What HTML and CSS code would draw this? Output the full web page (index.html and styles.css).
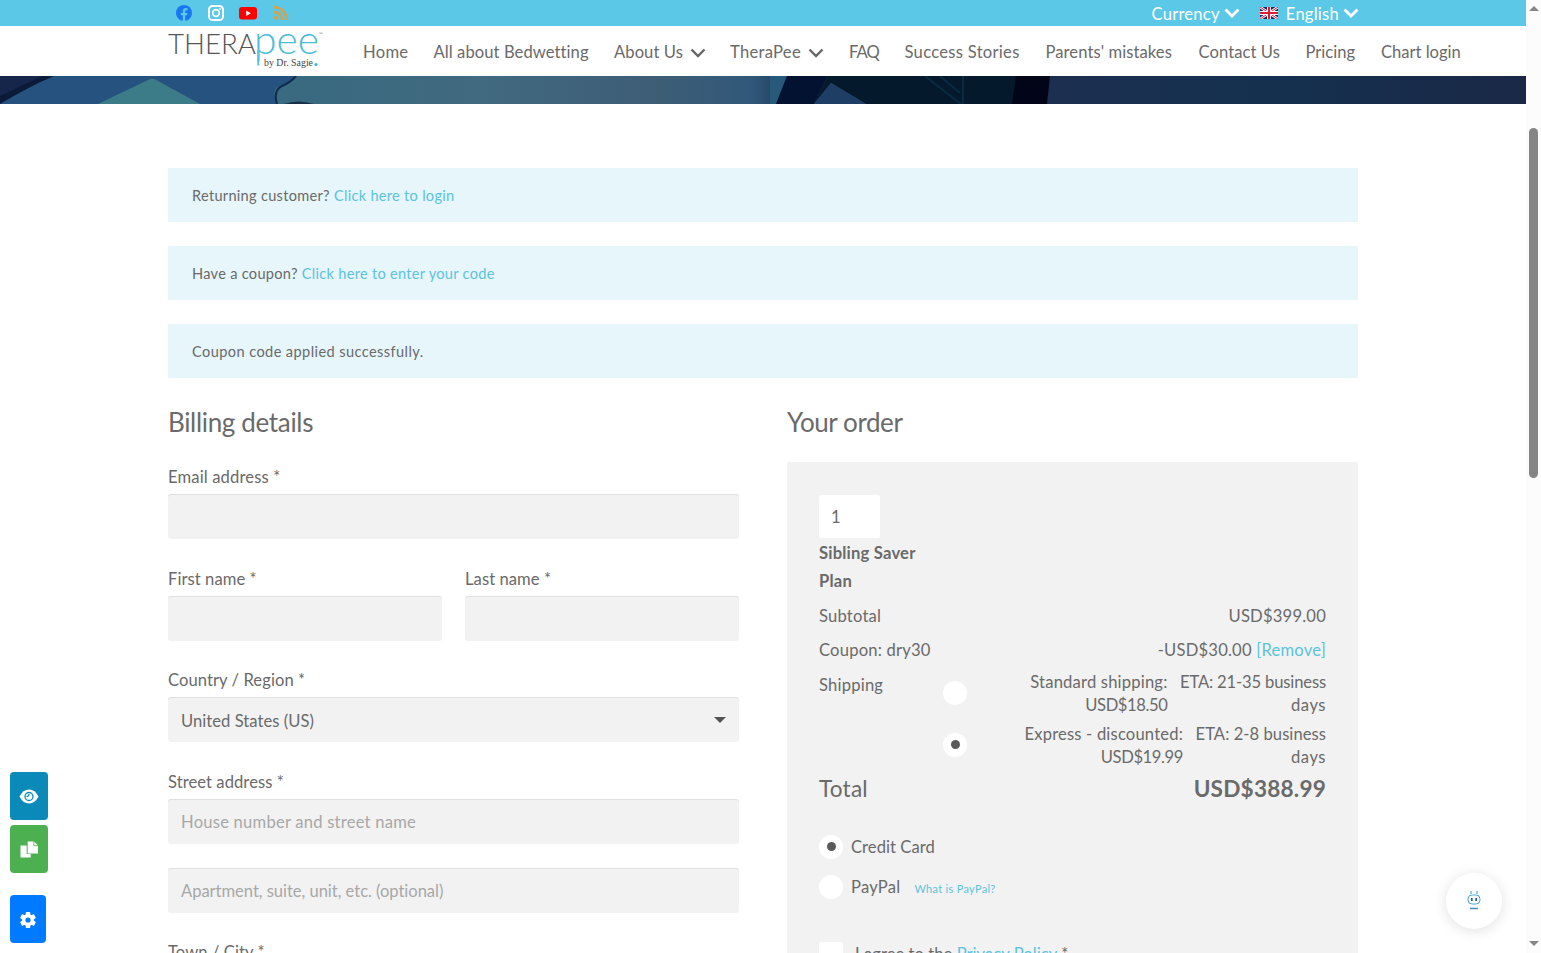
FILE: index.html
```
<!DOCTYPE html>
<html lang="en">
<head>
    <meta charset="utf-8">
    <title>Checkout - TheraPee</title>
    <link rel="stylesheet" href="styles.css">
</head>
<body>
<div class="page">
    <header>
        <div class="topbar">
            <div class="social">
                <svg width="16" height="16" viewBox="0 0 16 16"><circle cx="8" cy="8" r="8" fill="#1877f2"/><path d="M6.8 15.9V10.3H4.8V8h2V6.2c0-2 1.2-3.100 3-3.100l1.700.150v2h-1c-1 0-1.300.600-1.300 1.200V8h2.200l-.350 2.300H9.200v5.600z" fill="#5ac8e6"/></svg>
                <svg width="16" height="16" viewBox="0 0 16 16" fill="none" stroke="#fff"><rect x="1" y="1" width="14" height="14" rx="3.600" stroke-width="2"/><circle cx="8" cy="8" r="3.300" stroke-width="1.700"/><circle cx="12.100" cy="3.900" r=".9" fill="#fff" stroke="none"/></svg>
                <svg width="18" height="16" viewBox="0 0 18 16"><rect x="0" y="2" width="18" height="12.500" rx="3" fill="#f00"/><path d="M7.200 5.600l4.700 2.650-4.700 2.650z" fill="#fff"/></svg>
                <svg class="rss" width="16" height="16" viewBox="0 0 16 16"><circle cx="2.800" cy="12.800" r="2" fill="#c8a65a"/><path d="M1 7a8 8 0 0 1 8 8M1 2.200A12.800 12.800 0 0 1 13.800 15" fill="none" stroke="#c8a65a" stroke-width="2.800"/></svg>
            </div>
            <div class="switchers">
                <a class="currency">Currency</a>
                <svg width="16" height="10" viewBox="0 0 16 10"><path d="M1.500 1.500L8 8l6.500-6.500" fill="none" stroke="#fff" stroke-width="2.800"/></svg>
                <svg class="flag" width="18" height="12" viewBox="0 0 18 12"><rect width="18" height="12" fill="#1c2a5e"/><path d="M0 0l18 12M18 0L0 12" stroke="#fff" stroke-width="2.600"/><path d="M0 0l18 12M18 0L0 12" stroke="#d0203c" stroke-width="1"/><path d="M9 0v12M0 6h18" stroke="#fff" stroke-width="4"/><path d="M9 0v12M0 6h18" stroke="#d0203c" stroke-width="2.200"/></svg>
                <a class="lang">English</a>
                <svg width="16" height="10" viewBox="0 0 16 10"><path d="M1.500 1.500L8 8l6.500-6.500" fill="none" stroke="#fff" stroke-width="2.800"/></svg>
            </div>
        </div>
        <div class="navbar">
            <svg class="logo" width="158" height="46" viewBox="0 0 158 46">
                <text class="logo-thera" x="0" y="24" textLength="88" lengthAdjust="spacingAndGlyphs">THERA</text>
                <text class="logo-pee" x="86" y="24" textLength="65" lengthAdjust="spacingAndGlyphs">pee</text>
                <path d="M90.300 20v15.500" stroke="#5cc3dc" stroke-width="2"/>
                <text class="logo-tm" x="151" y="6">™</text>
                <text class="logo-by" x="96" y="36" textLength="49" lengthAdjust="spacingAndGlyphs">by Dr. Sagie</text>
                <circle cx="148" cy="34.500" r="1.600" fill="#3fb4d2"/>
            </svg>
            <nav class="menu">
                <a class="n1">Home</a>
                <a class="n2">All about Bedwetting</a>
                <a class="n3">About Us <svg width="16" height="10" viewBox="0 0 16 10"><path d="M1.500 1.500L8 8l6.500-6.500" fill="none" stroke="#666" stroke-width="2.400"/></svg></a>
                <a class="n4">TheraPee <svg width="16" height="10" viewBox="0 0 16 10"><path d="M1.500 1.500L8 8l6.500-6.500" fill="none" stroke="#666" stroke-width="2.400"/></svg></a>
                <a class="n5">FAQ</a>
                <a class="n6">Success Stories</a>
                <a class="n7">Parents' mistakes</a>
                <a class="n8">Contact Us</a>
                <a class="n9">Pricing</a>
                <a class="n10">Chart login</a>
            </nav>
        </div>
    </header>

    <svg class="hero" width="1526" height="28" viewBox="0 0 1526 28" preserveAspectRatio="none">
        <defs>
            <linearGradient id="tablet" x1="0" x2="1" y1="0" y2="0">
                <stop offset="0" stop-color="#386a80"/>
                <stop offset=".4" stop-color="#41697f"/>
                <stop offset=".75" stop-color="#3d5d75"/>
                <stop offset=".93" stop-color="#31587a"/>
                <stop offset="1" stop-color="#1f3d5a"/>
            </linearGradient>
            <linearGradient id="night" x1="0" x2="1" y1="0" y2="0">
                <stop offset="0" stop-color="#1c2f50"/>
                <stop offset=".5" stop-color="#14304e"/>
                <stop offset="1" stop-color="#1a2846"/>
            </linearGradient>
        </defs>
        <rect width="1526" height="28" fill="#265280"/>
        <path d="M0 0h48L0 26z" fill="#16264a"/>
        <path d="M42 0h12Q30 10 0 28v-8z" fill="#0b1a38"/>
        <path d="M98 28L148 4q5-3 10 1l42 23z" fill="#3b7c88"/>
        <path d="M295 0h492l-11 28H277q-6-14 2-18 12-4 16-10z" fill="url(#tablet)"/>
        <path d="M296 0q-5 6-14 10t-5 18" fill="none" stroke="#0f2c4c" stroke-width="2"/>
        <path d="M284 28q14-5 30 0z" fill="#182f48"/>
        <path d="M770 0h17l-11 28h-6z" fill="#26597a"/>
        <path d="M787 0h41l-14 28h-38z" fill="#031230"/>
        <path d="M828 0h190v28H866L831 7l-17 21z" fill="#041a2c"/>
        <path d="M831 7l35 21h-52z" fill="#1e3e66"/>
        <path d="M925 0l36 28M963 0v28M940 0l20 17" stroke="#0a2a40" stroke-width="2" fill="none"/>
        <path d="M1016 0h34v28h-38z" fill="#020418"/>
        <path d="M1050 0h476v28h-479z" fill="url(#night)"/>
    </svg>

    <main>
        <div class="notice login">Returning customer? <a>Click here to login</a></div>
        <div class="notice coupon">Have a coupon? <a>Click here to enter your code</a></div>
        <div class="notice applied">Coupon code applied successfully.</div>

        <div class="columns">
            <form class="billing">
                <h3>Billing details</h3>
                <div class="row">
                    <label class="l-email">Email address *</label>
                    <div class="field"></div>
                </div>
                <div class="row half">
                    <div>
                        <label class="l-first">First name *</label>
                        <div class="field"></div>
                    </div>
                    <div>
                        <label class="l-last">Last name *</label>
                        <div class="field"></div>
                    </div>
                </div>
                <div class="row">
                    <label class="l-country">Country / Region *</label>
                    <div class="field select"><span>United States (US)</span><i class="caret"></i></div>
                </div>
                <div class="row street">
                    <label class="l-street">Street address *</label>
                    <div class="field placeholder house">House number and street name</div>
                </div>
                <div class="row">
                    <div class="field placeholder apt">Apartment, suite, unit, etc. (optional)</div>
                </div>
                <div class="row">
                    <label class="l-town">Town / City *</label>
                    <div class="field"></div>
                </div>
            </form>

            <section class="order">
                <h3 class="order-title">Your order</h3>
                <div class="orderbox">
                    <div class="qty">1</div>
                    <div class="product"><span>Sibling Saver</span><br>Plan</div>
                    <div class="line"><span>Subtotal</span><span>USD$399.00</span></div>
                    <div class="line"><span>Coupon: dry30</span><span>-USD$30.00 <a>[Remove]</a></span></div>
                    <div class="shipping">
                        <span class="ship-label">Shipping</span>
                        <ul>
                            <li><i class="radio"></i><span class="method"><span>Standard shipping:</span><br>USD$18.50</span><span class="eta">ETA: 21-35 business<br><span>days</span></span></li>
                            <li><i class="radio checked"></i><span class="method"><span>Express - discounted:</span><br>USD$19.99</span><span class="eta express">ETA: 2-8 business<br><span>days</span></span></li>
                        </ul>
                    </div>
                    <div class="total"><span>Total</span><b>USD$388.99</b></div>
                    <div class="pay"><i class="radio checked"></i><span>Credit Card</span></div>
                    <div class="pay paypal"><i class="radio"></i><span>PayPal</span><a>What is PayPal?</a></div>
                    <div class="terms"><i class="checkbox"></i><span>I agree to the <a>Privacy Policy</a> *</span></div>
                </div>
            </section>
        </div>
    </main>
</div>

<aside class="scrollbar">
    <i class="up"></i>
    <i class="thumb"></i>
    <i class="down"></i>
</aside>

<div class="tools">
    <a class="tool view"><svg width="20" height="16" viewBox="0 0 20 16"><path d="M.5 8.500Q4 1.500 10 1.500t9.500 7Q16 15.500 10 15.500T.5 8.500z" fill="#fff"/><circle cx="10" cy="8.500" r="4" fill="none" stroke="#0a8ab8" stroke-width="1.300"/><path d="M7.500 8.700A2.600 2.600 0 0 0 10 6.100" fill="none" stroke="#0a8ab8" stroke-width="1.200"/></svg></a>
    <a class="tool copy"><svg width="18" height="18" viewBox="0 0 18 18" fill="#fff"><path d="M.5 5.500h6.200v8.500h4v3.500H.5z"/><path d="M7.700 1.500h6.300l4 4v8H7.700z"/><path d="M13.800 1.300v4.300H18" fill="none" stroke="#4caf50" stroke-width=".8"/></svg></a>
    <a class="tool gear"><svg width="18" height="18" viewBox="0 0 18 18"><g fill="#fff"><circle cx="9" cy="10" r="6"/><rect x="6.700" y="2" width="4.600" height="16" rx="1"/><rect x="6.700" y="2" width="4.600" height="16" rx="1" transform="rotate(60 9 10)"/><rect x="6.700" y="2" width="4.600" height="16" rx="1" transform="rotate(120 9 10)"/></g><circle cx="9" cy="10" r="2.600" fill="#007bff"/></svg></a>
</div>

<div class="chat">
    <svg width="16" height="20" viewBox="0 0 16 20" fill="none" stroke="#4aa9d8"><rect x="2" y="4" width="12" height="9" rx="4"/><path d="M5 0v3M11 0v3" stroke-width="1.200"/><path d="M5.800 7v3M10.200 7v3" stroke="#245b85" stroke-width="1.700"/><path d="M4 17.500h8" stroke="#3f8fc4" stroke-width="1.500"/></svg>
</div>
</body>
</html>
```
FILE: styles.css
```
body {
    margin: 0;
    height: 953px;
    overflow: hidden;
    display: flex;
    background: #fff;
    color: #6a6a6a;
    font-family: Lato, "Open Sans", sans-serif;
    font-size: 16.600px;
    line-height: 28px;
}

a {
    color: #5cc3dc;
    text-decoration: none;
    white-space: nowrap;
}

h3 {
    margin: 2px 0 0;
    font-size: 26px;
    font-weight: 400;
    line-height: 36px;
    letter-spacing: -0.33px;
}

.page {
    width: 1526px;
    height: 953px;
    overflow: hidden;
}

/* header */
.topbar {
    display: flex;
    justify-content: space-between;
    height: 26px;
    padding: 0 167px 0 176px;
    background: #5ac8e6;
}

.social,
.switchers {
    display: flex;
    align-items: center;
}

.social {
    gap: 15.500px;
}

.social svg {
    margin-top: -1px;
}

.switchers a {
    padding-top: 2px;
    color: #fff;
    letter-spacing: 0.23px;
}

.switchers svg {
    margin-left: 4px;
}

.switchers .flag {
    margin: 0 8px 0 20px;
}

.navbar {
    display: flex;
    height: 50px;
    padding-left: 168px;
}

.logo {
    flex: none;
    margin-top: 4px;
    overflow: visible;
}

.logo-thera {
    font-size: 27px;
    font-weight: 300;
    fill: #555;
}

.logo-pee {
    font-size: 40px;
    font-weight: 300;
    fill: #4bbcd8;
}

.logo-tm {
    font-size: 5px;
    fill: #888;
}

.logo-by {
    font-family: "Liberation Serif", serif;
    font-size: 11px;
    fill: #444;
}

.menu {
    display: grid;
    grid-template-columns: 45.500px 155.500px 91px 94px 30.500px 116px 128px 82px 50.500px 81px;
    column-gap: 25px;
    margin-left: 37px;
    line-height: 53px;
}

.menu a {
    color: #6a6a6a;
    letter-spacing: 0.07px;
}

.menu a svg {
    margin-left: 2.500px;
}

.menu .n1,
.menu .n4,
.menu .n6 {
    letter-spacing: 0.28px;
}

.menu .n5 {
    letter-spacing: -0.95px;
}

.menu .n9,
.menu .n10 {
    letter-spacing: -0.02px;
}

.hero {
    display: block;
}

/* content */
main {
    width: 1190px;
    padding: 64px 0 0 168px;
}

.notice {
    height: 54px;
    margin-bottom: 24px;
    padding-left: 24px;
    background: #e6f6fb;
    font-size: 14.600px;
    line-height: 55px;
    letter-spacing: 0.28px;
}

.applied {
    letter-spacing: 0.4px;
}

.columns {
    display: grid;
    grid-template-columns: 571px 571px;
    gap: 48px;
}

.row {
    margin-bottom: 25.500px;
}

.street {
    margin-bottom: 24px;
}

.billing h3 {
    margin-bottom: 23px;
}

.row label {
    display: block;
    height: 28px;
    margin-bottom: 3px;
    letter-spacing: 0.06px;
}

.row .l-email {
    letter-spacing: 0.14px;
}

.half {
    display: grid;
    grid-template-columns: 274px 274px;
    gap: 23px;
}

.field {
    box-sizing: border-box;
    height: 45px;
    padding: 0 13px 0 13px;
    border-radius: 3px;
    background: #f2f2f2;
    box-shadow: inset 0 1px 0 #e0e0e0;
    line-height: 47px;
}

.select {
    display: flex;
    align-items: center;
    justify-content: space-between;
    letter-spacing: 0.04px;
}

.select span {
    padding-top: 3px;
}

.caret {
    border: 6px solid transparent;
    border-top-color: #555;
    border-bottom: 0;
}

.placeholder {
    color: #a8a8a8;
    letter-spacing: -0.05px;
}

.house {
    letter-spacing: 0.22px;
}

/* order */
.order-title {
    margin-bottom: 22px;
    letter-spacing: -0.42px;
}

.orderbox {
    box-sizing: border-box;
    height: 540px;
    padding: 33px 32px 0;
    background: #f2f2f2;
    border-radius: 2px;
    letter-spacing: 0.2px;
}

.qty {
    box-sizing: border-box;
    width: 61px;
    height: 43px;
    padding-left: 12px;
    border-radius: 2px;
    background: #fff;
    line-height: 44px;
}

.product {
    margin: 1px 0 3px;
    font-weight: 700;
}

.line {
    display: flex;
    justify-content: space-between;
    height: 34px;
    line-height: 37px;
}

.shipping {
    display: flex;
    justify-content: space-between;
    height: 105px;
}

.ship-label {
    line-height: 39px;
}

.shipping ul {
    width: 384px;
    margin: 5px 0 0;
    padding: 0;
    list-style: none;
}

.shipping li {
    display: flex;
    height: 52px;
    text-align: right;
    line-height: 22.500px;
    white-space: nowrap;
}

.method {
    margin-left: auto;
    letter-spacing: -0.4px;
}

.method span {
    letter-spacing: 0.18px;
}

.eta {
    margin-left: 12.500px;
    letter-spacing: -0.15px;
}

.eta span {
    letter-spacing: 0.5px;
}

.express {
    letter-spacing: 0.05px;
}

.radio {
    flex: none;
    display: flex;
    align-items: center;
    justify-content: center;
    width: 24px;
    height: 24px;
    border-radius: 50%;
    background: #fff;
}

.shipping .radio {
    margin: 10px 0 0 1px;
}

.checked::after {
    content: "";
    width: 9px;
    height: 9px;
    margin-top: -1px;
    border-radius: 50%;
    background: #5a5a5a;
}

.total {
    display: flex;
    justify-content: space-between;
    margin-bottom: 20px;
    font-size: 22.600px;
    line-height: 36px;
}

.pay {
    display: flex;
    align-items: center;
    gap: 8px;
    height: 40px;
    letter-spacing: 0.05px;
}

.paypal {
    letter-spacing: 0.25px;
}

.pay a {
    margin: 3px 0 0 6px;
    font-size: 11px;
    letter-spacing: 0.3px;
}

.terms {
    display: flex;
    gap: 12px;
    margin-top: 33px;
    letter-spacing: 0.04px;
}

.checkbox {
    width: 24px;
    height: 24px;
    margin-top: 2px;
    border-radius: 2px;
    background: #fff;
}

/* scrollbar */
.scrollbar {
    display: flex;
    flex-direction: column;
    align-items: center;
    width: 15px;
    height: 953px;
    background: #fcfcfc;
}

.up {
    margin-top: 6px;
    border: 5px solid transparent;
    border-bottom-color: #858585;
    border-top: 0;
}

.thumb {
    width: 9px;
    height: 350px;
    margin-top: 117px;
    border-radius: 5px;
    background: #858585;
}

.down {
    margin: auto 0 7px;
    border: 5px solid transparent;
    border-top-color: #858585;
    border-bottom: 0;
}

/* floating buttons */
.tools {
    position: fixed;
    left: 10px;
    bottom: 10px;
}

.tool {
    display: flex;
    align-items: center;
    justify-content: center;
    width: 38px;
    height: 48px;
    border-radius: 4px;
}

.view {
    background: #0a8ab8;
}

.copy {
    margin: 5px 0 22px;
    background: #4caf50;
}

.gear {
    width: 36px;
    background: #007bff;
}

.chat {
    position: fixed;
    right: 39px;
    bottom: 24px;
    display: flex;
    align-items: center;
    justify-content: center;
    width: 56px;
    height: 56px;
    border-radius: 50%;
    background: #fff;
    box-shadow: 0 2px 14px rgba(0, 0, 0, 0.12);
}
```
